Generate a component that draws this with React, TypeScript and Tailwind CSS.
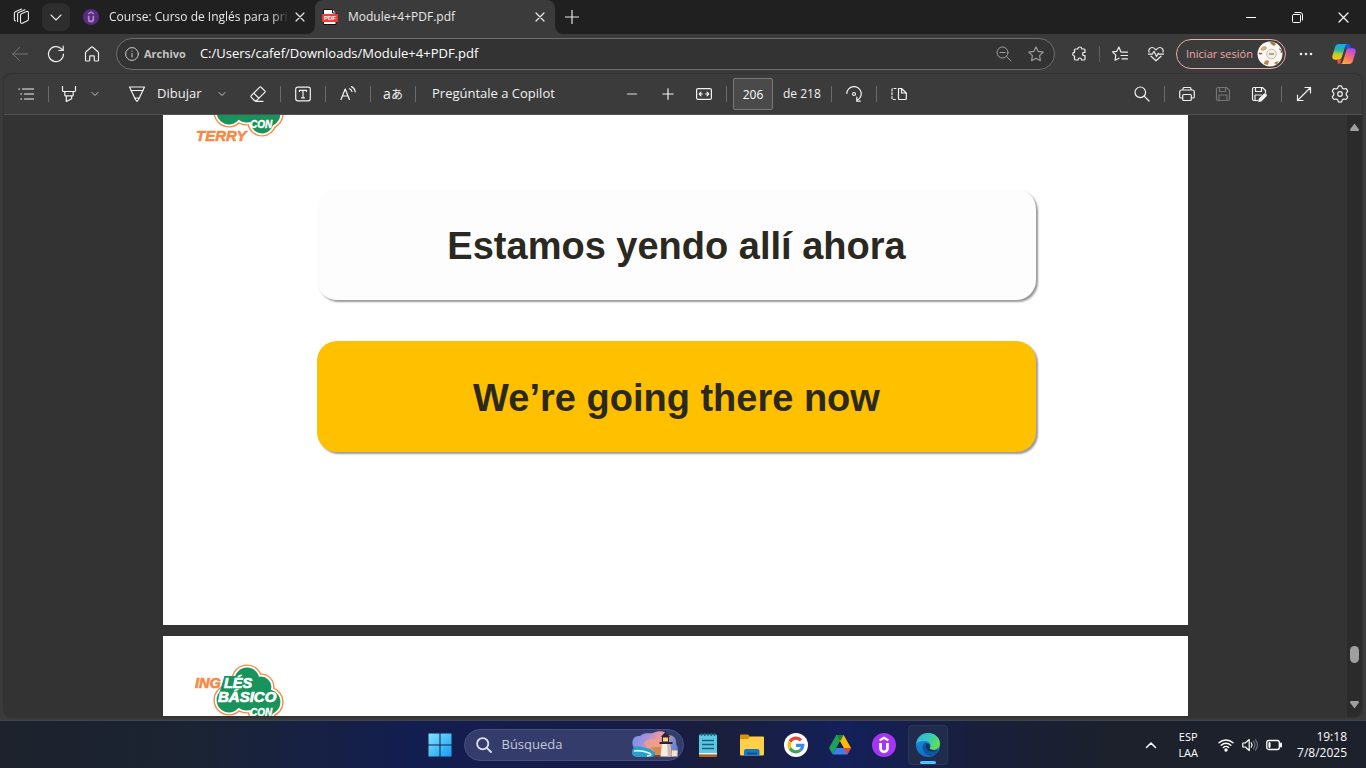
import React, { useState } from "react";

type Kids = { children?: React.ReactNode };

function Ico({ s = 16, w = 1, className = "", children }: Kids & { s?: number; w?: number; className?: string }) {
  return (
    <svg
      width={s}
      height={s}
      viewBox={`0 0 ${s} ${s}`}
      fill="none"
      stroke="currentColor"
      strokeWidth={w}
      strokeLinecap="round"
      strokeLinejoin="round"
      className={`shrink-0 ${className}`}
      aria-hidden="true"
    >
      {children}
    </svg>
  );
}

function IconButton({ label, className = "w-8", children }: Kids & { label: string; className?: string }) {
  return (
    <button type="button" aria-label={label} className={`flex h-8 shrink-0 items-center justify-center rounded ${className}`}>
      {children}
    </button>
  );
}

const Sep = () => <span className="mx-1.5 h-4 w-px shrink-0 bg-[#6a6a6a]" />;

const ChevronDown = () => (
  <Ico s={8} className="text-[#c4c4c4]">
    <path d="M1 2.5 4 5.5 7 2.5" />
  </Ico>
);

const Cross = ({ s = 10 }: { s?: number }) => (
  <Ico s={s} w={1.2}>
    <path d={`M1 1 ${s - 1} ${s - 1}M${s - 1} 1 1 ${s - 1}`} />
  </Ico>
);

function UdemyMark({ s, bg, fg }: { s: number; bg: string; fg: string }) {
  return (
    <svg width={s} height={s} viewBox="0 0 24 24" className="shrink-0" aria-hidden="true">
      <circle cx="12" cy="12" r="12" fill={bg} />
      <path d="M7.6 7.4 12 4.8 16.400 7.4" fill="none" stroke={fg} strokeWidth="2.2" />
      <path d="M8.600 10v5.400a3.400 3.400 0 0 0 6.800 0V10" fill="none" stroke={fg} strokeWidth="2.800" />
    </svg>
  );
}

function TabStrip() {
  return (
    <header className="flex h-[34px] shrink-0 items-center bg-[#202020] text-xs text-[#e8e8e8]">
      <IconButton label="Áreas de trabajo" className="ml-1 w-9">
        <Ico s={18} w={1.1}>
          <path d="M7.5 7.2a1.6 1.6 0 0 1 1-1.5l5-2.2a1.3 1.3 0 0 1 1.9 1.2v6.6a1.6 1.6 0 0 1-1 1.5l-5 2.4a1.3 1.3 0 0 1-1.9-1.2z" />
          <path d="M12 1.8 5.6 4.6a1.6 1.6 0 0 0-1 1.5v7.4M8.6 1 2.4 3.7a1.6 1.6 0 0 0-1 1.5v6.2c0 .7.4 1.2 1 1.5" />
        </Ico>
      </IconButton>
      <button type="button" aria-label="Buscar pestañas" className="ml-0.5 flex size-7 items-center justify-center rounded-lg bg-[#2e2e2e]">
        <Ico s={14} w={1.1}>
          <path d="M2 5 7 10 12 5" />
        </Ico>
      </button>
      <div className="flex h-full w-[245px] items-center pr-2.5 pl-[13px]">
        <UdemyMark s={16} bg="#5a2a82" fg="#a58ac4" />
        <span className="ml-2.5 flex-1 overflow-hidden whitespace-nowrap [mask-image:linear-gradient(to_right,black_90%,transparent)]">
          Course: Curso de Inglés para prin
        </span>
        <button type="button" aria-label="Cerrar pestaña" className="ml-1.5">
          <Cross />
        </button>
      </div>
      <div className="relative flex h-full w-[240px] items-center rounded-t-lg bg-[#3b3b3b] pr-2.5 pl-[7px]">
        <svg className="absolute bottom-0 -left-2" width="8" height="8" aria-hidden="true">
          <path d="M8 0v8H0a8 8 0 0 0 8-8z" fill="#3b3b3b" />
        </svg>
        <svg className="absolute -right-2 bottom-0" width="8" height="8" aria-hidden="true">
          <path d="M0 0v8h8a8 8 0 0 1-8-8z" fill="#3b3b3b" />
        </svg>
        <svg width="16" height="16" viewBox="0 0 16 16" className="shrink-0" aria-hidden="true">
          <path d="M1.5.5h9L14 4v11.5H1.5z" fill="#fff" stroke="#111" />
          <path d="M10.5.5V4H14" fill="#fff" stroke="#111" />
          <rect y="5" width="16" height="8" rx="1" fill="#f23b3b" />
          <text x="8" y="11.4" textAnchor="middle" fontSize="6" fontWeight="700" fill="#fff" fontFamily="Liberation Sans, sans-serif">
            PDF
          </text>
        </svg>
        <span className="ml-2.5 flex-1 whitespace-nowrap">Module+4+PDF.pdf</span>
        <button type="button" aria-label="Cerrar pestaña">
          <Cross />
        </button>
      </div>
      <IconButton label="Nueva pestaña" className="ml-px w-8">
        <Ico s={14} w={1.2}>
          <path d="M7 .5v13M.5 7h13" />
        </Ico>
      </IconButton>
      <div className="ml-auto flex text-white">
        <IconButton label="Minimizar" className="w-[46px]">
          <Ico s={10}>
            <path d="M0 5.5h10" />
          </Ico>
        </IconButton>
        <IconButton label="Restaurar" className="w-[46px]">
          <Ico s={11}>
            <rect x=".5" y="2.5" width="8" height="8" rx="1" />
            <path d="M3 .5h5a2.5 2.5 0 0 1 2.5 2.5v5" />
          </Ico>
        </IconButton>
        <IconButton label="Cerrar" className="w-[46px]">
          <Cross s={11} />
        </IconButton>
      </div>
    </header>
  );
}

function CopilotLogo() {
  return (
    <svg width="24" height="22" viewBox="0 0 24 22" aria-hidden="true">
      <defs>
        <linearGradient id="cpA" x1=".4" y1="0" x2=".3" y2="1">
          <stop offset="0" stopColor="#12a5f0" />
          <stop offset=".4" stopColor="#2fb99a" />
          <stop offset=".65" stopColor="#c5cc2c" />
          <stop offset="1" stopColor="#fbc40c" />
        </linearGradient>
        <linearGradient id="cpB" x1=".7" y1="0" x2=".3" y2="1">
          <stop offset="0" stopColor="#a54bf2" />
          <stop offset=".35" stopColor="#e25aa8" />
          <stop offset=".65" stopColor="#fb7a5c" />
          <stop offset="1" stopColor="#fdab45" />
        </linearGradient>
      </defs>
      <path d="M13 1h3.200c1.400 0 2 .8 2.400 2l1 3.400h-5.400z" fill="#1a55dd" />
      <path d="M7 1h8.500c-1.400.3-2 1.400-2.500 3l-3.100 10c-.6 2-1.500 2.700-3.200 2.700H3.200C.8 16.700-.2 15 .5 12.400l2.600-8.500C3.800 1.800 5 1 7 1z" fill="url(#cpA)" />
      <path d="M17 21H8.500c1.400-.3 2-1.400 2.500-3l3.100-10c.6-2 1.500-2.700 3.200-2.700h3.500c2.400 0 3.400 1.700 2.700 4.300l-2.600 8.500c-.7 2.100-1.900 2.900-3.900 2.900z" fill="url(#cpB)" />
      <path d="M5 16.700h4.500L8.800 19c-.3 1-.8 2-1.800 2-1.100 0-1.500-1-2-4.300z" fill="#ee4a3e" />
    </svg>
  );
}

function AddressBar() {
  const [url, setUrl] = useState("C:/Users/cafef/Downloads/Module+4+PDF.pdf");
  return (
    <div className="flex h-10 shrink-0 items-center bg-[#3b3b3b] pr-1.5 pl-1 text-[#ededed]">
      <div className="flex gap-1">
        <IconButton label="Atrás">
          <Ico className="text-[#767676]">
            <path d="M15.500 8H.5M7.500 1.500.8 8l6.700 6.500" />
          </Ico>
        </IconButton>
        <IconButton label="Actualizar">
          <Ico s={18} w={1.2}>
            <path d="M16.500 9A7.500 7.500 0 1 1 14 3.500L16 5.400M16.200 1.200v4.300h-4.400" />
          </Ico>
        </IconButton>
        <IconButton label="Inicio">
          <Ico w={1.2}>
            <path d="M1.500 7c0-.5.200-.9.600-1.200L7.200 1.300a1.200 1.200 0 0 1 1.600 0l5.100 4.500c.4.300.6.700.6 1.200v7c0 .6-.4 1-1 1h-2.400a.8.8 0 0 1-.8-.8v-3.700c0-.4-.3-.7-.7-.7H6.400c-.4 0-.7.3-.7.7v3.700a.8.800 0 0 1-.8.800H2.500c-.6 0-1-.4-1-1z" />
          </Ico>
        </IconButton>
      </div>
      <div className="mx-2 flex h-8 min-w-0 flex-1 items-center rounded-full border border-[#6e6e6e] bg-[#333333] pr-2.5 pl-2">
        <Ico s={14} className="text-[#cfcfcf]">
          <circle cx="7" cy="7" r="6.400" />
          <path d="M7 6.500v3.500M7 4v.3" />
        </Ico>
        <label htmlFor="url" className="ml-[5px] text-[11px] font-bold text-[#c4c4c4]">
          Archivo
        </label>
        <input
          id="url"
          value={url}
          onChange={(e) => setUrl(e.target.value)}
          className="ml-3.5 min-w-0 flex-1 bg-transparent text-[13px] text-white outline-none"
        />
        <button type="button" aria-label="Zoom" className="mr-4 text-[#a0a0a0]">
          <Ico>
            <circle cx="6.500" cy="6.500" r="5.500" />
            <path d="M10.600 10.600 15 15M4 6.500h5" />
          </Ico>
        </button>
        <button type="button" aria-label="Agregar a favoritos" className="text-[#a0a0a0]">
          <Ico w={1.100}>
            <path d="M8 .9 10.200 5.400 15.200 6.100 11.600 9.600 12.400 14.700 8 12.300 3.600 14.700 4.400 9.600.8 6.100 5.800 5.400z" />
          </Ico>
        </button>
      </div>
      <IconButton label="Extensiones">
        <Ico w={1.200}>
          <path d="M4.500 3h2.300a2 2 0 0 1 4 0H13c.6 0 1 .4 1 1v2.300h-.8a1.700 1.700 0 1 0 0 3.400h.8v3.300c0 .6-.4 1-1 1h-2.500v-.3a1.700 1.700 0 0 0-3.400 0v.3H4.500c-.6 0-1-.4-1-1V10a1.800 1.800 0 1 1 0-3.600V4c0-.6.4-1 1-1z" />
        </Ico>
      </IconButton>
      <span className="mx-1 h-4 w-px bg-[#5f5f5f]" />
      <IconButton label="Favoritos">
        <Ico w={1.200}>
          <path d="M9.500 6H8.900L6.900 1 4.800 5.300.5 5.900 3.800 9.200 3 14.300 7 12.200M10 6.200h5.500M9 9.500h6.500M10 12.800h5.500" />
        </Ico>
      </IconButton>
      <IconButton label="Rendimiento" className="ml-1 w-8">
        <Ico w={1.200}>
          <path d="M1 6.200C.3 3.500 2 1.500 4.200 1.500 6 1.500 7 2.600 8 3.800 9 2.600 10 1.500 11.800 1.500c2.200 0 3.900 2 3.200 4.700M3 10.200l5 4.600 5-4.600M.5 8.200h3.700L6 5.300l2.500 5.200 1.800-3.300.7 1h4.500" />
        </Ico>
      </IconButton>
      <button type="button" className="ml-1 flex h-[30px] items-center rounded-full border border-[#eeaaa6] pr-0.5 pl-[9px] text-[#eeaaa6]">
        <span className="w-[71px] text-left text-[11px] whitespace-nowrap">Iniciar sesión</span>
        <svg width="26" height="26" viewBox="0 0 26 26" aria-hidden="true">
          <defs>
            <clipPath id="av">
              <circle cx="13" cy="13" r="12.500" />
            </clipPath>
          </defs>
          <g clipPath="url(#av)">
            <rect width="26" height="26" fill="#fbf8f4" />
            <path d="M13 1c2-1 4 0 6 2l-2 2c-1-1-3-1-4-4z" fill="#a87848" />
            <path d="M4 8c1-2 3-3 5-2 1 1 0 3-2 3s-3 1-3-1z" fill="#e0b080" stroke="#b98a58" strokeWidth=".6" />
            <path d="M22 8c2 0 3 2 2 4M2 12c1 1 2 1 3 0" stroke="#8a5a30" strokeWidth="1.200" fill="none" />
            <circle cx="14.500" cy="13" r="4.800" fill="#f6eee2" stroke="#c4beb4" />
            <path d="M12 13h5" stroke="#b4a48e" strokeWidth="2" />
            <path d="M7 23c0-3 3-5 5-3l-1 4zM17 22c2-2 4-1 5-2l-2 4z" fill="#c08040" />
          </g>
        </svg>
      </button>
      <IconButton label="Más" className="ml-1 w-8">
        <Ico className="fill-current" w={0}>
          <circle cx="3" cy="8" r="1.300" />
          <circle cx="8" cy="8" r="1.300" />
          <circle cx="13" cy="8" r="1.300" />
        </Ico>
      </IconButton>
      <IconButton label="Copilot" className="ml-1.5 w-8">
        <CopilotLogo />
      </IconButton>
    </div>
  );
}

function PdfToolbar() {
  const [page, setPage] = useState("206");
  return (
    <div className="flex h-[41px] shrink-0 items-center rounded-t-lg border-b border-[#505050] bg-[#3b3b3b] px-1.5 text-[13px] text-[#f2f2f2]">
      <IconButton label="Contenido">
        <Ico w={1.200}>
          <path d="M4.500 3h11M6.500 8h9M6.500 13h9M.8 3h.8M2.800 8h.8M2.800 13h.8" />
        </Ico>
      </IconButton>
      <Sep />
      <IconButton label="Resaltar" className="w-7">
        <Ico w={1.200}>
          <path d="M1.500.5v4c0 .6.400 1 1 1h11c.6 0 1-.4 1-1v-4M3.800 5.500v3.400c0 .6.400 1 1 1h6.400c.6 0 1-.4 1-1V5.500M5.300 9.900v5.600l5.400-2.800V9.900" />
        </Ico>
      </IconButton>
      <IconButton label="Opciones de resaltado" className="w-6">
        <ChevronDown />
      </IconButton>
      <button type="button" className="ml-3.5 flex h-8 items-center whitespace-nowrap">
        <span className="flex w-8 justify-center">
          <Ico w={1.200}>
            <path d="M.5 1h15L9.600 13.500 8 15.500 6.400 13.500zM1.800 4.500h12.400M6.400 13.500V12h3.200v1.500" />
          </Ico>
        </span>
        <span className="ml-1 w-[53px] text-left">Dibujar</span>
      </button>
      <IconButton label="Opciones de dibujo" className="w-6">
        <ChevronDown />
      </IconButton>
      <IconButton label="Borrador" className="ml-2 w-8">
        <Ico w={1.200}>
          <path d="M9.700 1.200a1 1 0 0 1 1.400 0l3.700 3.700a1 1 0 0 1 0 1.400L7 14.200a2 2 0 0 1-2.800 0L1.300 11.300a1.200 1.200 0 0 1 0-1.700zM3.800 7.200l5 5M5.500 15.300h7.500" />
        </Ico>
      </IconButton>
      <Sep />
      <IconButton label="Agregar texto">
        <Ico w={1.200}>
          <rect x=".7" y="1.200" width="14.600" height="13.600" rx="2" />
          <path d="M4.500 5.500V4.300h7v1.200M8 4.300v7.500M6.500 11.800h3" />
        </Ico>
      </IconButton>
      <Sep />
      <IconButton label="Leer en voz alta">
        <Ico w={1.200}>
          <path d="M1 13.500 5.200 3l4.200 10.500M2.500 10h5.500M9.500 2.700c1.300.5 2.200 1.500 2.500 3M11.500.6c2 .9 3.400 2.700 3.700 5.200" />
        </Ico>
      </IconButton>
      <Sep />
      <IconButton label="Traducir">
        <span className="font-['Open_Sans','Noto_Sans_CJK_JP',sans-serif] text-xs whitespace-nowrap">
          <span className="text-sm">a</span>あ
        </span>
      </IconButton>
      <Sep />
      <button type="button" className="h-8 w-[146px] px-2.5 text-left whitespace-nowrap">
        Pregúntale a Copilot
      </button>
      <div className="ml-12 flex gap-1">
        <IconButton label="Alejar">
          <Ico s={12} w={1.500} className="text-[#a8a8a8]">
            <path d="M1.500 6h9" />
          </Ico>
        </IconButton>
        <IconButton label="Acercar">
          <Ico s={12} w={1.200}>
            <path d="M6 .8v10.400M.8 6h10.400" />
          </Ico>
        </IconButton>
        <IconButton label="Ajustar al ancho">
          <Ico w={1.200}>
            <rect x=".6" y="2.600" width="14.800" height="10.800" rx="1.500" />
            <path d="M3.300 8h3.200M5 6.200 3.200 8 5 9.800M12.700 8H9.500M11 6.200 12.800 8 11 9.800" />
          </Ico>
        </IconButton>
      </div>
      <Sep />
      <input
        aria-label="Número de página"
        value={page}
        onChange={(e) => setPage(e.target.value)}
        className="h-8 w-10 rounded-xs border border-[#7a7a7a] bg-[#4a4a4a] text-center text-xs text-white outline-none"
      />
      <span className="w-[52px] pl-2.5 text-xs whitespace-nowrap">de 218</span>
      <Sep />
      <IconButton label="Girar">
        <Ico w={1.200}>
          <path d="M.8 7.500A7.200 7.200 0 1 1 11 14.300M10.800 11v4.200h3.500" />
          <circle cx="8" cy="8" r="1.500" />
        </Ico>
      </IconButton>
      <Sep />
      <IconButton label="Vista de página">
        <Ico w={1.200}>
          <path d="M7.500 2.500H10.500L15.300 7v5.500c0 .6-.4 1-1 1H8.500c-.6 0-1-.4-1-1zM10.500 2.500V7h4.800" />
          <path d="M5 2.500H2c-.6 0-1 .4-1 1v9c0 .6.400 1 1 1h3" strokeDasharray="2 1.800" />
        </Ico>
      </IconButton>
      <div className="ml-auto flex items-center">
        <IconButton label="Buscar">
          <Ico w={1.200}>
            <circle cx="6.300" cy="6.300" r="5.300" />
            <path d="M10.200 10.200 15 15" />
          </Ico>
        </IconButton>
        <Sep />
        <div className="flex gap-1">
          <IconButton label="Imprimir">
            <Ico w={1.200}>
              <path d="M4 4V2.500c0-.6.400-1 1-1h6c.6 0 1 .4 1 1V4M3.500 12H2c-.8 0-1.300-.5-1.300-1.300V6c0-1.100.9-2 2-2h10.600c1.100 0 2 .9 2 2v4.700c0 .8-.5 1.300-1.300 1.300h-1.500" />
              <rect x="3.700" y="8.500" width="8.600" height="6" rx="1" />
            </Ico>
          </IconButton>
          <IconButton label="Guardar">
            <Ico className="text-[#757575]" w={1.200}>
              <path d="M3 1.500h8.500l3 3V13c0 .8-.7 1.500-1.500 1.500H3c-.8 0-1.500-.7-1.500-1.500V3c0-.8.700-1.500 1.500-1.500zM4.500 1.500v4h6v-4M4 14.500V9h8v5.500" />
            </Ico>
          </IconButton>
          <IconButton label="Guardar como">
            <Ico w={1.200}>
              <path d="M6.500 14.500H3c-.8 0-1.500-.7-1.500-1.500V3c0-.8.700-1.500 1.500-1.500h8.500l3 3V7M4.500 1.500v4h6v-4M4 14.500V9h6.500" />
              <path d="M7.800 15.300 8.300 13 13 8.300a1.300 1.300 0 0 1 1.900 1.900L10.200 14.800z" fill="currentColor" />
            </Ico>
          </IconButton>
        </div>
        <Sep />
        <div className="flex gap-1">
          <IconButton label="Pantalla completa">
            <Ico w={1.200}>
              <path d="M1.500 14.500l13-13M9 1.500h5.500V7M1.500 9v5.500H7" />
            </Ico>
          </IconButton>
          <IconButton label="Configuración">
            <Ico s={18} w={1.200}>
              <path d="M7.300 1.400a1 1 0 0 1 .9-.6h1.600a1 1 0 0 1 .9.600l.7 1.800 1.300.8 2-.3a1 1 0 0 1 1 .5l.8 1.400a1 1 0 0 1-.1 1.100L15.200 8.200v1.600l1.200 1.500a1 1 0 0 1 .1 1.100l-.8 1.400a1 1 0 0 1-1 .5l-2-.3-1.300.8-.7 1.800a1 1 0 0 1-.9.600H8.200a1 1 0 0 1-.9-.6l-.7-1.800-1.300-.8-2 .3a1 1 0 0 1-1-.5l-.8-1.400a1 1 0 0 1 .1-1.100L2.800 9.800V8.200L1.600 6.700a1 1 0 0 1-.1-1.100l.8-1.400a1 1 0 0 1 1-.5l2 .3 1.300-.8z" />
              <circle cx="9" cy="9" r="2.300" />
            </Ico>
          </IconButton>
        </div>
      </div>
    </div>
  );
}

function CloudShape({ grow, fill }: { grow: number; fill: string }) {
  const lobes = [
    [52, 16, 11],
    [66, 23, 9],
    [73, 38, 11],
    [34, 36, 11],
    [52, 32, 13],
    [67, 46, 10],
  ];
  return (
    <g fill={fill}>
      {lobes.map(([cx, cy, r]) => (
        <circle key={`${cx}-${cy}`} cx={cx} cy={cy} r={r + grow} />
      ))}
    </g>
  );
}

function CourseLogo({ scrolledOff }: { scrolledOff: boolean }) {
  return (
    <svg
      width="92"
      height="66"
      viewBox="0 0 92 66"
      className="ml-8 block"
      fontFamily="Liberation Sans, Arial, sans-serif"
      fontWeight="700"
      fontStyle="italic"
      role="img"
      aria-label="Inglés básico con Terry"
    >
      <CloudShape grow={4.6} fill="#f58a45" />
      <CloudShape grow={3.2} fill="#ffffff" />
      <CloudShape grow={1.4} fill="#17935b" />
      <path d="M29.500 12H46V30H24z" fill="#17935b" />
      {!scrolledOff && (
        <>
          <text x="0" y="24" fontSize="14.500" fill="#f58a45" stroke="#f58a45" strokeWidth=".7">
            ING
          </text>
          <text x="29" y="24" fontSize="14.500" fill="#fff" stroke="#fff" strokeWidth=".7">
            LÉS
          </text>
          <text x="23" y="38" fontSize="15" fill="#fff" stroke="#fff" strokeWidth=".7">
            BÁSICO
          </text>
        </>
      )}
      <text x="55" y="52" fontSize="10" fill="#fff" stroke="#fff" strokeWidth=".4">
        CON
      </text>
      <text x="1" y="65" fontSize="15" fill="#f58a45" stroke="#f58a45" strokeWidth=".6">
        TERRY
      </text>
    </svg>
  );
}

function Slide({ scrolledOff = false, children }: Kids & { scrolledOff?: boolean }) {
  return (
    <section className="h-[577px] w-full max-w-[1025px] shrink-0 bg-white pt-7">
      <CourseLogo scrolledOff={scrolledOff} />
      {children}
    </section>
  );
}

function Phrase({ tone, children }: Kids & { tone: string }) {
  return (
    <p className={`flex h-[111px] items-center justify-center rounded-[20px] pt-1 text-[38px] font-bold text-[#2b281f] shadow-[2px_2px_2px_rgba(0,0,0,0.4)] ${tone}`}>
      {children}
    </p>
  );
}

function Viewer() {
  return (
    <main className="flex min-h-0 flex-1 overflow-hidden rounded-b-lg bg-[#333333]">
      <div className="flex min-w-0 flex-1 flex-col items-center gap-[11px] overflow-hidden border-b border-[#333333] font-['Liberation_Sans',Arial,sans-serif]">
        <div className="-mt-[67px] flex w-full shrink-0 justify-center">
          <Slide scrolledOff>
            <div className="mt-[47px] mr-[152px] ml-[154px] flex flex-col gap-[41px]">
              <Phrase tone="bg-[#fdfdfd]">Estamos yendo allí ahora</Phrase>
              <Phrase tone="bg-[#ffc000]">We’re going there now</Phrase>
            </div>
          </Slide>
        </div>
        <Slide />
      </div>
      <div className="flex w-[15px] shrink-0 flex-col items-center bg-[#2b2b2b] py-2 text-[#9f9f9f]">
        <svg width="9" height="8" aria-hidden="true">
          <path d="M4.500.5 9 6.500Q9 8 8 8H1Q0 8 0 6.500z" fill="currentColor" />
        </svg>
        <div className="flex-1" />
        <div className="h-[17px] w-[9px] rounded-full bg-[#9f9f9f]" />
        <div className="h-[38px]" />
        <svg width="9" height="8" aria-hidden="true">
          <path d="M4.500 7.500 9 1.500Q9 0 8 0H1Q0 0 0 1.500z" fill="currentColor" />
        </svg>
      </div>
    </main>
  );
}

function AppButton({ label, active = false, children }: Kids & { label: string; active?: boolean }) {
  return (
    <button
      type="button"
      aria-label={label}
      className={`relative flex size-10 items-center justify-center rounded ${active ? "border border-[#2c3555] bg-[#212b4c]" : ""}`}
    >
      {children}
      {active && <span className="absolute bottom-0 h-[3px] w-4 rounded-full bg-[#4cc2ff]" />}
    </button>
  );
}

function Taskbar() {
  return (
    <footer className="flex h-12 shrink-0 items-center border-t border-[#3f4453] bg-[linear-gradient(90deg,#1d222c_0%,#1b2433_14%,#131e50_30%,#171b45_48%,#1a1f3c_53%,#13205a_62%,#191f3a_72%,#1c212b_82%,#1c212b_100%)] text-xs text-white">
      <div className="flex-1 pl-5" />
      <nav className="flex items-center gap-1">
        <button type="button" aria-label="Inicio" className="flex size-10 items-center justify-center">
          <svg width="24" height="24" viewBox="0 0 24 24" aria-hidden="true">
            <defs>
              <linearGradient id="win" x1="0" y1="0" x2="1" y2="1">
                <stop offset="0" stopColor="#7fe3fb" />
                <stop offset="1" stopColor="#159df2" />
              </linearGradient>
            </defs>
            <path d="M.5.5h11v11H.5zM12.500.5h11v11h-11zM.5 12.500h11v11H.5zM12.500 12.500h11v11h-11z" fill="url(#win)" />
          </svg>
        </button>
        <div className="flex h-8 w-[220px] items-center rounded-full border border-[#465080] bg-[#333c6a] pr-[3px] pl-[11px]">
          <Ico w={1.800} className="text-[#dfe2ee]">
            <circle cx="6.700" cy="6.700" r="5.600" />
            <path d="M10.800 10.800 15 15" />
          </Ico>
          <input
            aria-label="Búsqueda"
            placeholder="Búsqueda"
            className="ml-2.5 min-w-0 flex-1 bg-transparent text-[13px] outline-none placeholder:text-[#c5c9dc]"
          />
          <svg width="50" height="28" viewBox="0 0 50 28" aria-hidden="true">
            <defs>
              <linearGradient id="sky" x1="0" y1="0" x2="1" y2=".3">
                <stop offset="0" stopColor="#5a9ae8" />
                <stop offset=".35" stopColor="#a58fe0" />
                <stop offset=".6" stopColor="#f09a9a" />
                <stop offset="1" stopColor="#5b86d8" />
              </linearGradient>
              <clipPath id="blob">
                <path d="M8 26C2 26 0 21 4 17 0 10 4 4 10 5 14 1 20 3 23 2c6-3 12-2 15 2 6 0 9 4 8 9 4 5 1 13-5 13z" />
              </clipPath>
            </defs>
            <g clipPath="url(#blob)">
              <rect width="50" height="28" fill="url(#sky)" />
              <path d="M14 12c4-5 10-5 16-2l6 4-8 5H18z" fill="#f3a27c" opacity=".7" />
              <path d="M0 16c8-2 14 0 20 2l6 4-4 6H0z" fill="#2aa0c8" />
              <path d="M4 20c6-1 10 0 15 2 3 1 2 3-2 3" stroke="#e6f8fb" strokeWidth="1.500" fill="none" />
              <path d="M20 17c8-3 22 1 28 3v8H22c4-3 6-7-2-11z" fill="#d98a4a" />
              <path d="M24 24h20v4H22z" fill="#6b4a44" />
            </g>
            <path d="M32 12h8l1.500 13.500h-11z" fill="#f4ede6" />
            <path d="M37 12h3l1.500 13.500H38z" fill="#cdb9b4" />
            <path d="M29.500 11h13v2h-13zM31.500 5l4-4 4 4v1h-8zM35 0h1v3h-1z" fill="#2b2533" />
            <path d="M32.500 6h6v5h-6z" fill="#ffd27a" stroke="#2b2533" />
            <path d="M42 19.500h5.500v6H42z" fill="#efe2d8" />
          </svg>
        </div>
        <AppButton label="Bloc de notas">
          <svg width="18" height="24" viewBox="0 0 18 24" aria-hidden="true">
            <rect y="1.500" width="18" height="22" rx="1" fill="#5cc8e2" />
            <path d="M0 20h18v1.500H0z" fill="#f4f4f4" />
            <path d="M0 21.500h18V23q0 1-1 1H1q-1 0-1-1z" fill="#b5651d" />
            <path d="M2.500 0v3M5.700 0v3M9 0v3M12.300 0v3M15.500 0v3" stroke="#16688a" strokeWidth="1.400" />
            <path d="M3 7.500h12M3 11.500h12M3 15.500h12" stroke="#14607f" strokeWidth="1.600" />
          </svg>
        </AppButton>
        <AppButton label="Explorador de archivos">
          <svg width="24" height="22" viewBox="0 0 24 22" aria-hidden="true">
            <path d="M0 1.500Q0 .5 1 .5h7l2.500 2.500H10V8H0z" fill="#d8930c" />
            <path d="M0 5h8l2.500-2.500H23q1 0 1 1V20.500q0 1-1 1H1q-1 0-1-1z" fill="#ffcf48" />
            <path d="M4 21.500V17q0-2 2-2h11.500q2 0 2 2v4.500z" fill="#1577c8" />
            <path d="M7 18.500h10v2H7z" fill="#0b5598" />
          </svg>
        </AppButton>
        <AppButton label="Google">
          <svg width="24" height="24" viewBox="0 0 24 24" aria-hidden="true">
            <circle cx="12" cy="12" r="12" fill="#fff" />
            <g fill="none" strokeWidth="3.200">
              <path d="M17 7.300A6.800 6.800 0 0 0 6.100 8.600" stroke="#ea4335" />
              <path d="M6.100 8.600a6.800 6.800 0 0 0 0 6.800" stroke="#fbbc05" />
              <path d="M6.100 15.400a6.800 6.800 0 0 0 10.400 1.700" stroke="#34a853" />
              <path d="M16.500 17.100A6.800 6.800 0 0 0 18.800 12.400H12" stroke="#4285f4" />
            </g>
          </svg>
        </AppButton>
        <AppButton label="Google Drive">
          <svg width="22" height="20" viewBox="0 0 22 20" aria-hidden="true">
            <path d="M7.300 0h7.400L11 6.500 3.700 19.500 0 13z" fill="#1fa05a" />
            <path d="M7.300 0h7.400L22 13h-7.300z" fill="#fbbc05" />
            <path d="M7.300 13H22l-3.700 6.500H3.700z" fill="#3f7de8" />
            <path d="M14.700 13H22l-3.700 6.500z" fill="#e5443a" />
            <path d="M7.300 0h7.400L11 6.500z" fill="#188443" />
            <path d="M11 6.500 14.700 13H7.300z" fill="#1a1f44" />
          </svg>
        </AppButton>
        <AppButton label="Udemy">
          <UdemyMark s={24} bg="#a435f0" fg="#ffffff" />
        </AppButton>
        <AppButton label="Microsoft Edge" active>
          <svg width="24" height="24" viewBox="0 0 24 24" aria-hidden="true">
            <defs>
              <linearGradient id="edA" x1="0" y1="0" x2="1" y2=".4">
                <stop offset="0" stopColor="#2fb2ea" />
                <stop offset=".6" stopColor="#39cbb4" />
                <stop offset="1" stopColor="#5fdc58" />
              </linearGradient>
              <linearGradient id="edB" x1="0" y1="0" x2="0" y2="1">
                <stop offset="0" stopColor="#1b93dd" />
                <stop offset="1" stopColor="#0f6fc4" />
              </linearGradient>
            </defs>
            <circle cx="12" cy="12" r="12" fill="url(#edB)" />
            <path d="M.2 11C1 4.500 6 0 12 0c7 0 12 5 12 10.500 0 4-3 6.500-6.500 6.500-3 0-4.500-1.200-3.600-2.400 1.700-2.300 0-6.600-4.600-6.600C5 8 1.500 9.200.2 11z" fill="url(#edA)" />
            <path d="M9.300 9.500C6.600 11 6 14.500 7.500 17.800c1.500 3.400 5 5.400 8.500 5.300 2.500-1 4.500-2.500 5.800-4.700.3-.6-.1-.9-.7-.6-4.600 2-10 .7-11.400-3.300-.6-1.800-.5-3.500.8-4.900z" fill="#0e55a4" />
            <path d="M13.900 14.600c-.9 1.200.6 2.400 3.600 2.400 1.700 0 3.300-.6 4.500-1.600-.5 1.300-1 2-1.500 2.500-4.500 1.700-9.500.4-10.700-3.500-.4-1.500-.2-3 .5-4.200 2-.2 5 1.900 3.600 4.400z" fill="#17325e" />
          </svg>
        </AppButton>
      </nav>
      <div className="flex flex-1 items-center justify-end pr-[19px] leading-4">
        <button type="button" aria-label="Mostrar iconos ocultos" className="mr-[21px]">
          <Ico s={12} w={1.500}>
            <path d="M1.500 8.500 6 4l4.500 4.500" />
          </Ico>
        </button>
        <button type="button" className="mr-5 text-center text-[11px] leading-4">
          ESP
          <br />
          LAA
        </button>
        <button type="button" aria-label="Red, volumen y batería" className="mr-[15px] flex items-center gap-2">
          <Ico w={1.400}>
            <path d="M1 5.800a10 10 0 0 1 14 0M3.200 8.300a6.800 6.800 0 0 1 9.600 0M5.400 10.600a3.700 3.700 0 0 1 5.200 0" />
            <circle cx="8" cy="13" r="1" fill="currentColor" />
          </Ico>
          <Ico w={1.200}>
            <path d="M.8 6v4h2.400l4 3.500v-11L3.200 6zM9.300 5.800c.9 1.300.9 3.100 0 4.400" />
            <path d="M11.500 4.200c1.700 2.300 1.700 5.300 0 7.600M13.500 2.800c2.400 3.200 2.400 7.200 0 10.400" stroke="#6a6f78" />
          </Ico>
          <Ico w={1.300}>
            <rect x=".8" y="3.500" width="12.500" height="9" rx="2" />
            <path d="M15 6.500v3" strokeWidth="2" />
            <path d="M3.500 6v4" strokeWidth="2" />
          </Ico>
        </button>
        <button type="button" className="text-right">
          19:18
          <br />
          7/8/2025
        </button>
      </div>
    </footer>
  );
}

export default function App() {
  return (
    <div className="flex h-screen flex-col overflow-hidden bg-[#3b3b3b] font-['Open_Sans','Noto_Sans',sans-serif]">
      <TabStrip />
      <AddressBar />
      <div className="mx-1 mb-[3px] flex min-h-0 flex-1 flex-col overflow-hidden rounded-lg shadow-[0_0_2px_rgba(0,0,0,0.5)]">
        <PdfToolbar />
        <Viewer />
      </div>
      <Taskbar />
    </div>
  );
}
